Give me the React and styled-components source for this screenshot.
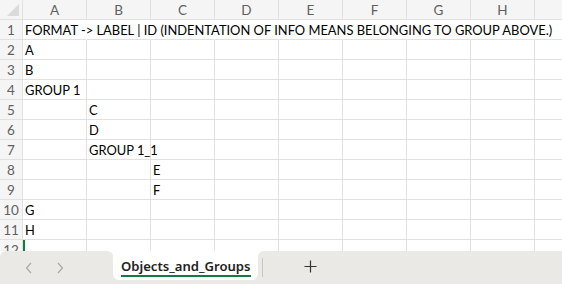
import React from 'react';
import styled, { createGlobalStyle } from 'styled-components';

const GlobalStyle = createGlobalStyle`
  html, body { margin: 0; padding: 0; background: #fff; }
  body { font-family: "Lato", "Liberation Sans", Arial, sans-serif; }
  * { box-sizing: border-box; }
`;

const COLS = ['A', 'B', 'C', 'D', 'E', 'F', 'G', 'H', 'I'];
const BAR = '#ebe9e6';

const rows = [
  { n: 1, cells: { 0: 'FORMAT -> LABEL | ID (INDENTATION OF INFO MEANS BELONGING TO GROUP ABOVE.)' } },
  { n: 2, cells: { 0: 'A' } },
  { n: 3, cells: { 0: 'B' } },
  { n: 4, cells: { 0: 'GROUP 1' } },
  { n: 5, cells: { 1: 'C' } },
  { n: 6, cells: { 1: 'D' } },
  { n: 7, cells: { 1: 'GROUP 1_1' } },
  { n: 8, cells: { 2: 'E' } },
  { n: 9, cells: { 2: 'F' } },
  { n: 10, cells: { 0: 'G' } },
  { n: 11, cells: { 0: 'H' } },
  { n: 12, cells: {}, selected: 0 },
];

const Screen = styled.div`
  width: 562px;
  height: 284px;
  overflow: hidden;
  display: flex;
  flex-direction: column;
`;

const Sheet = styled.div`
  flex: 1;
  overflow: hidden;
  display: grid;
  grid-template-columns: 23px repeat(9, 64px);
  grid-auto-rows: 20px;
  align-content: start;
`;

const Corner = styled.div`
  position: relative;
  background: #f5f5f5;
  border-right: 1px solid #e1e1e1;
  border-bottom: 1px solid #e1e1e1;
  &::after {
    content: '';
    position: absolute;
    right: 3px;
    bottom: 3px;
    width: 0;
    height: 0;
    border-left: 12px solid transparent;
    border-bottom: 12px solid #dadada;
  }
`;

const ColHead = styled.div`
  background: #f5f5f5;
  border-right: 1px solid #e1e1e1;
  border-bottom: 1px solid #e1e1e1;
  color: #616161;
  font-size: 13.5px;
  display: flex;
  align-items: center;
  justify-content: center;
`;

const RowHead = styled(ColHead)``;

const Cell = styled.div`
  position: relative;
  border-right: 1px solid #e1e1e1;
  border-bottom: 1px solid #e1e1e1;
  font-size: 12.9px;
  color: #000;
  padding-left: 2px;
  padding-top: 1px;
  display: flex;
  align-items: center;
  white-space: nowrap;
  overflow: visible;
  z-index: ${(p) => (p.$text ? 1 : 0)};
  ${(p) => p.$covered && 'border-right-color: transparent;'}
  ${(p) => p.$selected && 'box-shadow: inset 2px 0 0 #107c41;'}
`;

const TabBar = styled.div`
  height: 33px;
  flex: none;
  background: #fff;
  display: flex;
  align-items: stretch;
`;

const Nav = styled.div`
  width: 113px;
  background: ${BAR};
  border-radius: 6px 6px 0 0;
  display: flex;
  align-items: center;
  padding-left: 25px;
  gap: 23px;
  color: #a8a8a8;
`;

const TabSlot = styled.div`
  background: ${BAR};
  display: flex;
`;

const Tab = styled.div`
  background: #fff;
  border-radius: 0 0 6px 6px;
  width: 145px;
  margin-bottom: 4px;
  display: flex;
  flex-direction: column;
  align-items: flex-start;
  justify-content: center;
  padding: 0 0 0 8px;
`;

const TabLabel = styled.span`
  font-family: "Noto Sans", "Liberation Sans", sans-serif;
  font-weight: 600;
  font-size: 13.1px;
  white-space: nowrap;
  color: #222;
  line-height: 18px;
  border-bottom: 2.5px solid #107c41;
  padding-top: 3px;
`;

const Rest = styled.div`
  flex: 1;
  background: ${BAR};
  border-radius: 6px 0 0 0;
  display: flex;
  align-items: stretch;
`;

const Divider = styled.div`
  width: 1px;
  background: #c8c8c8;
  margin: 7px 0 7px 4px;
`;

const AddButton = styled.div`
  width: 94px;
  display: flex;
  align-items: center;
  justify-content: center;
  padding-bottom: 2px;
  color: #333;
`;

const Chevron = ({ dir }) => (
  <svg width="8" height="12" viewBox="0 0 8 12" fill="none" stroke="currentColor" strokeWidth="1.2">
    {dir === 'left' ? <path d="M6 1L1.5 6L6 11" /> : <path d="M2 1L6.5 6L2 11" />}
  </svg>
);

export default function App() {
  return (
    <Screen>
      <GlobalStyle />
      <Sheet>
        <Corner />
        {COLS.map((c) => (
          <ColHead key={c}>{c}</ColHead>
        ))}
        {rows.map((r) => (
          <React.Fragment key={r.n}>
            <RowHead>{r.n}</RowHead>
            {COLS.map((c, i) => (
              <Cell
                key={c}
                $text={!!r.cells[i]}
                $covered={r.n === 1 && i < 8}
                $selected={r.selected === i}
              >
                {r.cells[i] || ''}
              </Cell>
            ))}
          </React.Fragment>
        ))}
      </Sheet>
      <TabBar>
        <Nav>
          <Chevron dir="left" />
          <Chevron dir="right" />
        </Nav>
        <TabSlot>
          <Tab>
            <TabLabel>Objects_and_Groups</TabLabel>
          </Tab>
        </TabSlot>
        <Rest>
          <Divider />
          <AddButton>
            <svg width="13" height="13" viewBox="0 0 13 13" stroke="currentColor" strokeWidth="1.2">
              <path d="M6.5 0.5V12.5M0.5 6.5H12.5" />
            </svg>
          </AddButton>
        </Rest>
      </TabBar>
    </Screen>
  );
}
